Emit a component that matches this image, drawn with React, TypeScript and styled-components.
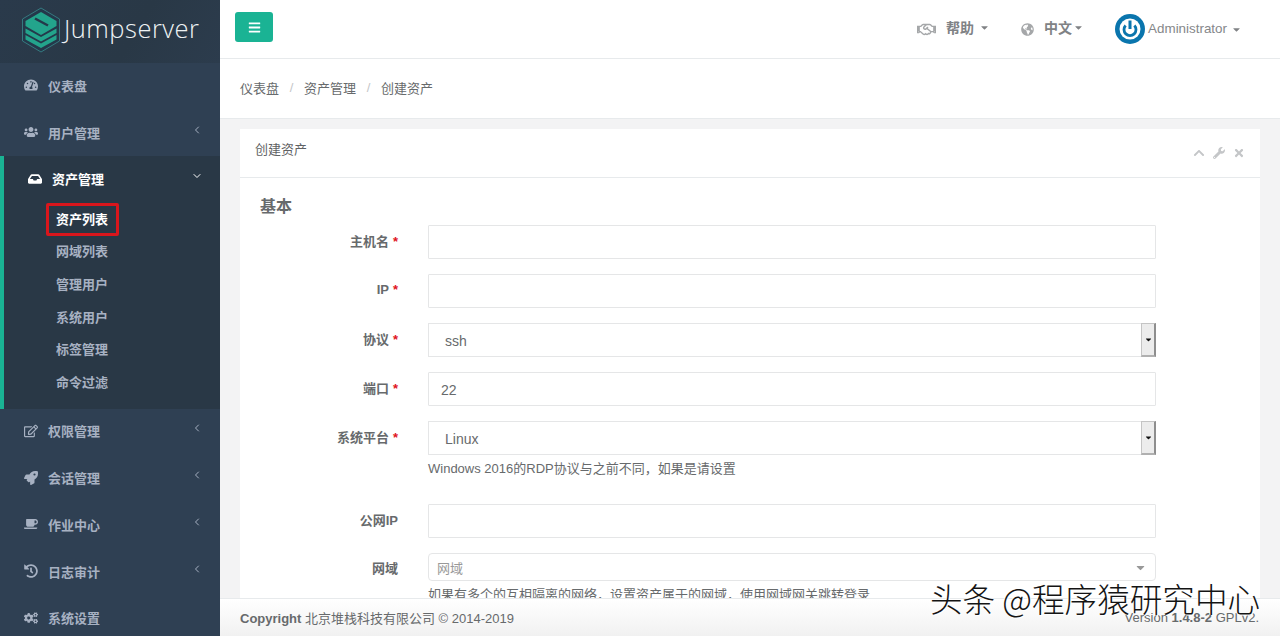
import React from 'react';
import styled, { createGlobalStyle } from 'styled-components';
import {
  FaBars,
  FaCaretDown,
  FaChevronUp,
  FaCoffee,
  FaCogs,
  FaGlobeAmericas,
  FaHistory,
  FaInbox,
  FaRegEdit,
  FaRegHandshake,
  FaRocket,
  FaTachometerAlt,
  FaTimes,
  FaUsers,
  FaWrench,
} from 'react-icons/fa';
import { FiChevronDown, FiChevronLeft } from 'react-icons/fi';

const FONT = '"Liberation Sans", "Noto Sans CJK SC", sans-serif';

const GlobalStyle = createGlobalStyle`
  html, body {
    margin: 0;
    height: 100%;
    overflow: hidden;
    background: #f3f3f4;
    font-family: ${FONT};
    color: #676a6c;
  }
  * { box-sizing: border-box; }
`;

const Page = styled.div`
  position: relative;
  display: flex;
  width: 1280px;
  height: 636px;
  overflow: hidden;
`;

const Sidebar = styled.nav`
  flex: 0 0 220px;
  height: 636px;
  overflow: hidden;
  background: #2f4053;
  display: flex;
  flex-direction: column;
`;

const LogoBar = styled.div`
  flex: none;
  height: 63px;
  background: linear-gradient(120deg, #2a3a4b 0%, #293846 60%, #2c3c4d 100%);
  display: flex;
  align-items: center;
  padding: 0 0 4px 21px;
  gap: 3px;
`;

const LogoText = styled.span`
  font-family: "Open Sans", sans-serif;
  font-weight: 300;
  font-size: 25.5px;
  letter-spacing: 0.5px;
  line-height: 30px;
  margin-bottom: 3px;
  color: #eef2f4;
`;

const NavItem = styled.div`
  flex: none;
  height: 46.7px;
  display: flex;
  align-items: center;
  padding: 0 17px 2px 24px;
  font-size: 13px;
  font-weight: 700;
  color: #a7b1c2;
`;

const NavIcon = styled.span`
  flex: 0 0 24px;
  display: flex;
  align-items: center;
  font-size: 14px;
`;

const NavLabel = styled.span`
  flex: 1;
`;

const Chevron = styled.span`
  display: flex;
  font-size: 12px;
  margin-top: -5px;
`;

const ActiveGroup = styled.div`
  flex: none;
  background: #293846;
  border-left: 4px solid #1ab394;
  padding-bottom: 10px;
`;

const ActiveHead = styled(NavItem)`
  color: #fff;
`;

const SubItem = styled.div<{ $current?: boolean }>`
  position: relative;
  height: 32.6px;
  display: flex;
  align-items: center;
  padding: 0 0 2px 52px;
  font-size: 13px;
  font-weight: 700;
  color: ${({ $current }) => ($current ? '#fff' : '#a7b1c2')};
`;

const RedMark = styled.span`
  position: absolute;
  left: 42px;
  top: 0;
  width: 73px;
  height: 33px;
  border: 3px solid #d9161c;
  border-radius: 2px;
`;

const Main = styled.div`
  flex: 1;
  min-width: 0;
  display: flex;
  flex-direction: column;
`;

const TopBar = styled.header`
  height: 59px;
  flex: none;
  background: #fff;
  border-bottom: 1px solid #e7eaec;
  display: flex;
  align-items: flex-start;
  padding: 12px 38px 0 15px;
`;

const ToggleButton = styled.button`
  width: 38px;
  height: 30px;
  padding: 0;
  border: none;
  border-radius: 3px;
  background: #1ab394;
  color: #fff;
  font-size: 13px;
  display: flex;
  align-items: center;
  justify-content: center;
`;

const TopRight = styled.div`
  margin-left: auto;
  height: 34px;
  display: flex;
  align-items: center;
  color: #8a8c8e;
`;

const TopLink = styled.span<{ $gap: number }>`
  display: flex;
  align-items: center;
  font-size: 14px;
  font-weight: 700;
  color: #808285;
  padding-bottom: 4px;
  margin-right: ${({ $gap }) => $gap}px;
`;

const TopIcon = styled.span<{ $gap: number; $size: number }>`
  display: flex;
  font-size: ${({ $size }) => $size}px;
  color: #a5a7a9;
  margin-right: ${({ $gap }) => $gap}px;
`;

const Caret = styled.span<{ $left: number }>`
  display: flex;
  font-size: 11px;
  margin-left: ${({ $left }) => $left}px;
  color: #808285;
`;

const UserName = styled.span`
  font-size: 13.4px;
  color: #85878a;
  margin-left: 3px;
  padding-bottom: 2px;
`;

const Crumbs = styled.div`
  height: 60px;
  flex: none;
  background: #fff;
  border-bottom: 1px solid #e7eaec;
  display: flex;
  align-items: center;
  padding: 0 0 2px 20px;
  font-size: 13px;
  color: #676a6c;
`;

const CrumbSep = styled.span`
  width: 25px;
  text-align: center;
  color: #c4c6c8;
`;

const Content = styled.div`
  flex: 1;
  min-height: 0;
  overflow: hidden;
  padding: 10px 20px 0;
`;

const Panel = styled.section`
  background: #fff;
`;

const PanelHead = styled.div`
  height: 49px;
  border-bottom: 1px solid #e7eaec;
  display: flex;
  align-items: center;
  padding: 0 15px 10px 15px;
  font-size: 13px;
  color: #5f6264;
`;

const PanelTools = styled.div`
  margin-left: auto;
  margin-top: 10px;
  display: flex;
  align-items: center;
  gap: 8px;
  font-size: 12px;
  color: #c4c6c8;
`;

const PanelBody = styled.div`
  padding: 20px 104px 0 20px;
`;

const SectionTitle = styled.h3`
  margin: 0 0 10px;
  font-size: 16px;
  line-height: 17px;
  font-weight: 700;
  color: #676a6c;
`;

const Row = styled.div<{ $below?: number }>`
  display: grid;
  grid-template-columns: 168px 728px;
  align-items: center;
  margin-bottom: ${({ $below }) => $below ?? 15}px;
`;

const Label = styled.label<{ $lift?: number }>`
  text-align: right;
  padding: 0 30px ${({ $lift }) => $lift ?? 4}px 0;
  font-size: 13px;
  font-weight: 700;
  color: #676a6c;
`;

const Star = styled.span`
  color: #e0141c;
  margin-left: 4px;
`;

const Input = styled.input`
  display: block;
  width: 100%;
  height: 34px;
  padding: 2px 12px 0;
  border: 1px solid #e5e6e7;
  border-radius: 1px;
  background: #fff;
  font-family: ${FONT};
  font-size: 14px;
  color: #676a6c;
  outline: none;
`;

const NativeSelect = styled.div`
  height: 34px;
  display: flex;
  align-items: center;
  border: 1px solid #e5e6e7;
  border-right: none;
  padding-left: 16px;
  font-size: 14px;
  color: #676a6c;
`;

const SelectValue = styled.span`
  flex: 1;
  padding-top: 2px;
`;

const SelectButton = styled.span`
  width: 15px;
  align-self: stretch;
  margin: -1px 0;
  display: flex;
  align-items: center;
  justify-content: center;
  background: #ececec;
  border: 1px solid #c4c4c4;
  border-right: 2px solid #8e8e8e;
  border-bottom: 2px solid #b0b0b0;
  color: #111;
  font-size: 9px;
`;

const DomainSelect = styled.div`
  height: 28px;
  display: flex;
  align-items: center;
  justify-content: space-between;
  padding: 0 8px;
  border: 1px solid #e5e6e7;
  border-radius: 4px;
  font-size: 13px;
  color: #999;
`;

const Help = styled.div<{ $below: number }>`
  margin: 5px 0 ${({ $below }) => $below}px 168px;
  font-size: 13px;
  line-height: 18px;
  color: #676a6c;
  white-space: nowrap;
`;

const Footer = styled.footer`
  height: 38px;
  flex: none;
  background: linear-gradient(#ffffff, #f1f1f1);
  border-top: 1px solid #e7eaec;
  display: flex;
  align-items: center;
  justify-content: space-between;
  padding: 0 21px 0 20px;
  font-size: 13px;
  color: #676a6c;
`;

const Watermark = styled.div`
  position: absolute;
  left: 930px;
  top: 577px;
  font-family: "Noto Sans CJK SC", sans-serif;
  font-size: 32.6px;
  line-height: 42px;
  font-weight: 300;
  white-space: nowrap;
  color: #141414;
  text-shadow: 1px 1px 0 #fff, -1px 0 0 #fff;
`;

const JumpserverMark = () => (
  <svg width="40" height="46" viewBox="0 0 40 46">
    <path d="M20 1 38.500 12V34L20 45 1.500 34V12Z" fill="#24384a" stroke="#357a80" strokeWidth="1" />
    <path d="M4.500 28 20 36.500 35.500 28V32.500L20 41 4.500 32.500Z" fill="#23a48c" />
    <path d="M4.500 21.500 20 30 35.500 21.500V26L20 34.500 4.500 26Z" fill="#23a48c" />
    <path d="M20 5 35.500 14V19L20 28 4.500 19V14Z" fill="#23a48c" />
    <path d="M14 11.500 27 18.500" fill="none" stroke="#24384a" strokeWidth="2.400" />
  </svg>
);

const PowerAvatar = () => (
  <svg width="30" height="30" viewBox="0 0 30 30">
    <circle cx="15" cy="15" r="15" fill="#0a75ad" />
    <circle cx="15" cy="15" r="10.500" fill="#fff" />
    <path d="M10.600 11.500a6 6 0 1 0 8.800 0" fill="none" stroke="#0a75ad" strokeWidth="2.800" />
    <rect x="13.500" y="6.500" width="3" height="8.500" fill="#0a75ad" />
  </svg>
);

const topMenus = [
  { label: '仪表盘', icon: <FaTachometerAlt /> },
  { label: '用户管理', icon: <FaUsers />, more: true },
];

const bottomMenus = [
  { label: '权限管理', icon: <FaRegEdit />, more: true },
  { label: '会话管理', icon: <FaRocket />, more: true },
  { label: '作业中心', icon: <FaCoffee />, more: true },
  { label: '日志审计', icon: <FaHistory />, more: true },
  { label: '系统设置', icon: <FaCogs /> },
];

const assetLinks = ['资产列表', '网域列表', '管理用户', '系统用户', '标签管理', '命令过滤'];

const MenuRow = ({ label, icon, more }: { label: string; icon: React.ReactNode; more?: boolean }) => (
  <NavItem>
    <NavIcon>{icon}</NavIcon>
    <NavLabel>{label}</NavLabel>
    {more && (
      <Chevron>
        <FiChevronLeft />
      </Chevron>
    )}
  </NavItem>
);

const App = () => (
  <Page>
    <GlobalStyle />
    <Sidebar>
      <LogoBar>
        <JumpserverMark />
        <LogoText>Jumpserver</LogoText>
      </LogoBar>
      {topMenus.map((m) => (
        <MenuRow key={m.label} {...m} />
      ))}
      <ActiveGroup>
        <ActiveHead>
          <NavIcon>
            <FaInbox />
          </NavIcon>
          <NavLabel>资产管理</NavLabel>
          <Chevron>
            <FiChevronDown />
          </Chevron>
        </ActiveHead>
        {assetLinks.map((name, i) => (
          <SubItem key={name} $current={i === 0}>
            {name}
            {i === 0 && <RedMark />}
          </SubItem>
        ))}
      </ActiveGroup>
      {bottomMenus.map((m) => (
        <MenuRow key={m.label} {...m} />
      ))}
    </Sidebar>

    <Main>
      <TopBar>
        <ToggleButton>
          <FaBars />
        </ToggleButton>
        <TopRight>
          <TopIcon $gap={10} $size={19}>
            <FaRegHandshake />
          </TopIcon>
          <TopLink $gap={31}>
            帮助
            <Caret $left={5}>
              <FaCaretDown />
            </Caret>
          </TopLink>
          <TopIcon $gap={10} $size={13}>
            <FaGlobeAmericas />
          </TopIcon>
          <TopLink $gap={31}>
            中文
            <Caret $left={1}>
              <FaCaretDown />
            </Caret>
          </TopLink>
          <PowerAvatar />
          <UserName>Administrator</UserName>
          <Caret $left={4}>
            <FaCaretDown />
          </Caret>
        </TopRight>
      </TopBar>

      <Crumbs>
        仪表盘
        <CrumbSep>/</CrumbSep>
        资产管理
        <CrumbSep>/</CrumbSep>
        创建资产
      </Crumbs>

      <Content>
        <Panel>
          <PanelHead>
            创建资产
            <PanelTools>
              <FaChevronUp />
              <FaWrench />
              <FaTimes />
            </PanelTools>
          </PanelHead>
          <PanelBody>
            <SectionTitle>基本</SectionTitle>
            <Row>
              <Label>
                主机名<Star>*</Star>
              </Label>
              <Input />
            </Row>
            <Row>
              <Label>
                IP<Star>*</Star>
              </Label>
              <Input />
            </Row>
            <Row>
              <Label>
                协议<Star>*</Star>
              </Label>
              <NativeSelect>
                <SelectValue>ssh</SelectValue>
                <SelectButton>
                  <FaCaretDown />
                </SelectButton>
              </NativeSelect>
            </Row>
            <Row>
              <Label>
                端口<Star>*</Star>
              </Label>
              <Input defaultValue="22" />
            </Row>
            <Row $below={0}>
              <Label>
                系统平台<Star>*</Star>
              </Label>
              <NativeSelect>
                <SelectValue>Linux</SelectValue>
                <SelectButton>
                  <FaCaretDown />
                </SelectButton>
              </NativeSelect>
            </Row>
            <Help $below={26}>Windows 2016的RDP协议与之前不同，如果是请设置</Help>
            <Row>
              <Label>公网IP</Label>
              <Input />
            </Row>
            <Row $below={0}>
              <Label $lift={0}>网域</Label>
              <DomainSelect>
                网域
                <FaCaretDown />
              </DomainSelect>
            </Row>
            <Help $below={0}>如果有多个的互相隔离的网络，设置资产属于的网域，使用网域网关跳转登录</Help>
          </PanelBody>
        </Panel>
      </Content>

      <Footer>
        <span>
          <strong>Copyright</strong> 北京堆栈科技有限公司 © 2014-2019
        </span>
        <span>
          Version <strong>1.4.8-2</strong> GPLv2.
        </span>
      </Footer>
    </Main>

    <Watermark>头条 @程序猿研究中心</Watermark>
  </Page>
);

export default App;
